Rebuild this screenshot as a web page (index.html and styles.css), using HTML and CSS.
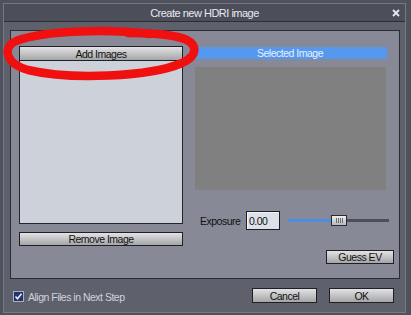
FILE: index.html
```html
<!DOCTYPE html>
<html>
<head>
  <title>Create new HDRI image</title>
  <link rel="stylesheet" href="styles.css">
</head>
<body>
  <div class="window">
    <!-- title bar -->
    <div class="titlebar">
      <span></span>
      <span class="title">Create new HDRI image</span>
      <svg class="close" width="8" height="8" viewBox="0 0 8 8">
        <path d="M1 1 L7 7 M7 1 L1 7" stroke="#e8eaf0" stroke-width="1.8"/>
      </svg>
    </div>

    <!-- main panel -->
    <div class="panel">
      <div class="left-col">
        <button class="btn add-btn" type="button">Add Images</button>
        <div class="listbox"></div>
        <button class="btn remove-btn" type="button">Remove Image</button>
      </div>

      <div class="right-col">
        <div class="selected-bar">Selected Image</div>
        <div class="preview"></div>

        <div class="exposure-row">
          <span class="exposure-label">Exposure</span>
          <div class="exposure-input">0.00</div>
          <div class="slider">
            <div class="slider-fill"></div>
            <div class="slider-thumb">
              <i></i><i></i><i></i><i></i>
            </div>
            <div class="slider-rest"></div>
          </div>
        </div>

        <div class="guess-row">
          <button class="btn guess-btn" type="button">Guess EV</button>
        </div>
      </div>
    </div>

    <!-- bottom row -->
    <div class="footer">
      <label class="align-check">
        <svg width="11" height="11" viewBox="0 0 11 11">
          <rect x="0.5" y="0.5" width="10" height="10" fill="#25356a" stroke="#aab0c4"/>
          <path d="M2.5 5.5 L4.5 7.8 L8.5 2.8" fill="none" stroke="#e6ecff" stroke-width="1.6"/>
        </svg>
        <span>Align Files in Next Step</span>
      </label>
      <div class="footer-buttons">
        <button class="btn dlg-btn" type="button">Cancel</button>
        <button class="btn dlg-btn" type="button">OK</button>
      </div>
    </div>
  </div>

  <!-- red marker drawn over the screenshot -->
  <svg class="marker" width="411" height="315" viewBox="0 0 411 315">
    <path d="M150 34 C110 29 45 30 16 41 C3 47 4 63 28 70 C70 80 150 77 182 63 C199 55 199 42 178 37 C165 34 148 33 128 33"
          fill="none" stroke="#f01010" stroke-width="8.5" stroke-linecap="round"/>
  </svg>
</body>
</html>
```

FILE: styles.css
```css
/* HDRI dialog */
body {
  margin: 0;
  width: 411px;
  height: 315px;
  background: #4f515c;
  font-family: "Liberation Sans", Arial, sans-serif;
  font-size: 10.5px;
  letter-spacing: -0.5px;
  position: relative;
  overflow: hidden;
}
.window {
  box-sizing: border-box;
  width: 403px;
  height: 310px;
  margin: 3px 0 0 3px;
  border: 1px solid #767884;
  background: #5e606c;
  display: flex;
  flex-direction: column;
}
.titlebar {
  height: 17px;
  background: #4c4e5a;
  border-bottom: 1px solid #2c2e36;
  display: grid;
  grid-template-columns: 1fr auto 1fr;
  align-items: center;
  color: #e8eaf0;
}
.title {
  font-size: 11px;
}
.close {
  justify-self: end;
  margin-right: 5px;
}
.panel {
  box-sizing: border-box;
  width: 390px;
  height: 249px;
  margin: 8px 0 0 6px;
  border: 1px solid #2a2c34;
  background: #878a96;
  padding: 15px 5px 0 8px;
  display: flex;
}
.btn {
  box-sizing: border-box;
  border: 1px solid #1e2026;
  background: linear-gradient(#e2e2e4, #c4c4c6 50%, #a4a5a8);
  color: #111;
  font-family: inherit;
  font-size: 10.5px;
  letter-spacing: -0.5px;
  padding: 0;
  margin: 0;
  line-height: 12px;
  cursor: pointer;
}
.left-col {
  width: 164px;
  display: flex;
  flex-direction: column;
}
.add-btn {
  height: 15px;
  width: 164px;
}
.listbox {
  box-sizing: border-box;
  height: 163px;
  border: 1px solid #23252c;
  border-top: none;
  background: #cdd1da;
}
.remove-btn {
  height: 14px;
  width: 164px;
  margin-top: 8px;
}
.right-col {
  width: 201px;
  margin-left: 10px;
  display: flex;
  flex-direction: column;
}
.selected-bar {
  width: 194px;
  height: 12px;
  margin-top: 1px;
  background: #5598ee;
  color: #e8f0ff;
  text-align: center;
  line-height: 12px;
}
.preview {
  width: 191px;
  height: 123px;
  margin: 8px 0 0 2px;
  background: #808080;
}
.exposure-row {
  margin-top: 21px;
  height: 19px;
  display: flex;
  align-items: center;
}
.exposure-label {
  width: 46px;
  margin-left: 7px;
  color: #111;
}
.exposure-input {
  box-sizing: border-box;
  width: 34px;
  height: 19px;
  border: 1px solid #1c1e24;
  box-shadow: inset 1px 1px 0 #f4f6fa;
  background: #dde0e8;
  color: #111;
  padding: 3px 0 0 2px;
}
.slider {
  width: 101px;
  margin-left: 8px;
  display: flex;
  align-items: center;
}
.slider-fill {
  width: 43px;
  height: 3px;
  background: #4a8ee4;
}
.slider-thumb {
  box-sizing: border-box;
  width: 16px;
  height: 11px;
  border: 1px solid #2a2c32;
  background: linear-gradient(#eeeeee, #b8b8ba);
  display: flex;
  justify-content: center;
  align-items: center;
  gap: 1px;
}
.slider-thumb i {
  width: 1px;
  height: 5px;
  background: #6a6c72;
}
.slider-rest {
  flex: 1;
  height: 3px;
  background: #4c4e58;
}
.guess-row {
  margin-top: 20px;
  display: flex;
  justify-content: flex-end;
}
.guess-btn {
  width: 68px;
  height: 14px;
}
.footer {
  flex: 1;
  display: flex;
  align-items: center;
  justify-content: space-between;
  padding: 0 11px 0 9px;
}
.align-check {
  display: flex;
  align-items: center;
  gap: 4px;
  color: #d0d3db;
  margin-top: 2px;
}
.footer-buttons {
  display: flex;
  gap: 12px;
}
.dlg-btn {
  width: 65px;
  height: 15px;
}
.marker {
  position: absolute;
  left: 0;
  top: 0;
  pointer-events: none;
}
```
